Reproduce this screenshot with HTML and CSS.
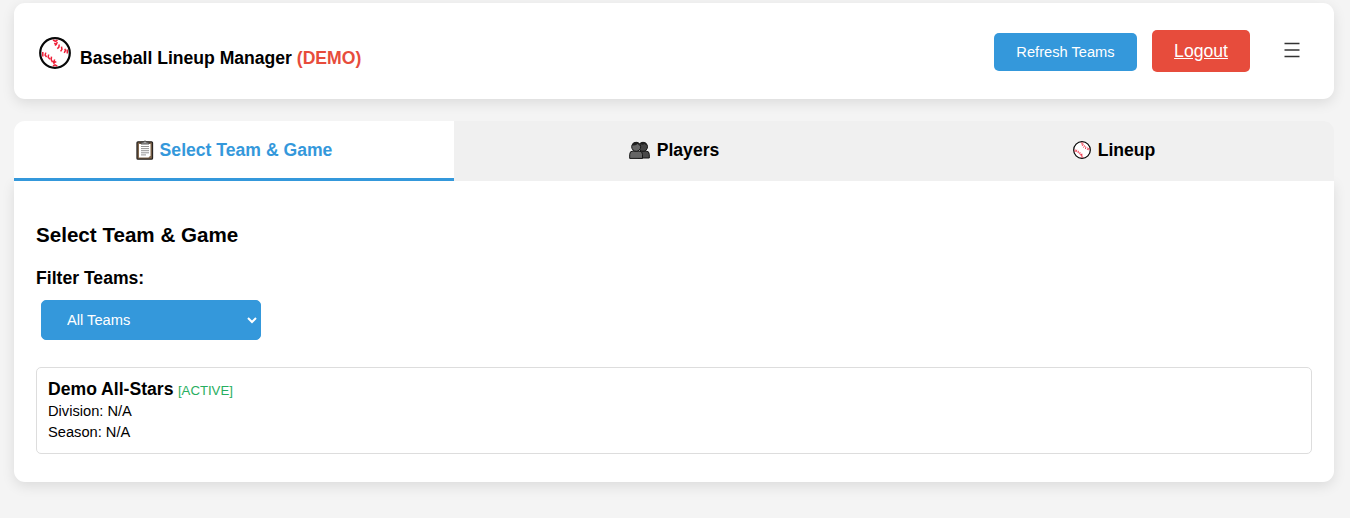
FILE: index.html
```html
<!DOCTYPE html>
<html lang="en">
<head>
<meta charset="utf-8">
<title>Baseball Lineup Manager</title>
<link rel="stylesheet" href="styles.css">
</head>
<body>
<svg class="defs" width="0" height="0" aria-hidden="true">
  <symbol id="ball" viewBox="0 0 32 32">
    <circle class="ball-skin" cx="16" cy="16" r="14.8"/>
    <g class="stitches">
      <path d="M14 3l2.500 1.300L18.500 3M15.800 8.300l1.500-.9L18.300 5M18.300 11.600l1.600-1.400.3-2.700M21.600 14.300l1.300-1.900-.4-2.700M25.200 15.800l1.200-2.100-.5-2M28.300 16.500l-.1-4M15.300 6l1.700 1.400"/>
      <path d="M3.800 15v4.500M6.800 15.600L6.100 18l1.500 2M9.600 17.500l-.4 2.700 1.800 2M12.500 19.700l-.3 2.900 1.300 2.500M15.700 22.500l-1.200 3 .8 1.300M14.500 25.500l2.800-.7M14 29l2-1.200 2.300 1.300"/>
    </g>
  </symbol>
</svg>
<div class="page">
  <header class="header">
    <div class="brand">
      <svg class="logo"><use href="#ball"/></svg>
      <h1 class="title">Baseball Lineup Manager <span class="demo">(DEMO)</span></h1>
    </div>
    <div class="actions">
      <button class="refresh">Refresh Teams</button>
      <a class="logout" href="#">Logout</a>
      <button class="menu" aria-label="Menu"><svg width="16" height="16" viewBox="0 0 16 16"><path d="M.5 1.500h15M.5 8h15M.5 14.500h15"/></svg></button>
    </div>
  </header>
  <main>
    <nav class="tabs">
      <a class="tab tab-active">
        <svg class="tab-icon" viewBox="0 0 18 20">
          <rect x="1" y="1.800" width="15.500" height="17.400" rx="1" fill="#80664b" stroke="#292522" stroke-width="1.300"/>
          <path d="M3 4h11.500v11.500L12.500 17.500H3z" fill="#fff"/>
          <path d="M5 6.500h8M5 8.600h8M5 10.700h8M5 12.800h8M5 14.900h5" stroke="#888" stroke-width=".9"/>
          <path d="M5 4V2.200h2.500Q9-.8 10.500 2.200H13V4z" fill="#aaa" stroke="#333" stroke-width=".8"/>
        </svg>
        <span class="tab-text">Select Team &amp; Game</span>
      </a>
      <a class="tab">
        <svg class="tab-icon people" viewBox="0 0 21 20">
          <g stroke="#171717" stroke-width="1">
            <path d="M9 18v-4q0-3 3-3h5q3.300 0 3.300 3.500V18z" fill="#4a4a4a"/>
            <circle cx="14" cy="6.800" r="4.500" fill="#444"/>
            <path d="M.7 18.400v-4q0-3.400 3.300-3.400h6q3.500 0 3.500 3.400v4z" fill="#656565"/>
            <circle cx="7.200" cy="6.800" r="4.500" fill="#666"/>
          </g>
          <path d="M2.800 5.300q4 1 6-1.500 1 2 2.300 2.200Q10 2 6.900 2 3.400 2.300 2.800 5.300zM11 3.800q3 2 4.500 0 1 1.500 2.700 1.500-1-3.300-4-3.300-1.700 0-3.200 1.800z" fill="#202020"/>
        </svg>
        <span class="tab-text">Players</span>
      </a>
      <a class="tab">
        <svg class="tab-icon small-ball"><use href="#ball"/></svg>
        <span class="tab-text">Lineup</span>
      </a>
    </nav>
    <section class="panel">
      <h2 class="heading">Select Team &amp; Game</h2>
      <label class="filter-label" for="filter">Filter Teams:</label>
      <select class="filter" id="filter"><option>All Teams</option></select>
      <article class="team">
        <div class="team-head"><strong class="team-name">Demo All-Stars</strong> <span class="status">[ACTIVE]</span></div>
        <div class="detail">Division: N/A</div>
        <div class="detail">Season: N/A</div>
      </article>
    </section>
  </main>
</div>
</body>
</html>
```
FILE: styles.css
```css
* { box-sizing: border-box; }
body {
  margin: 0;
  background: #f4f4f4;
  color: #000;
  font-family: "Liberation Sans", Arial, sans-serif;
}
.defs { position: absolute; }
.page { min-height: 100vh; padding: 3px 16px 0 14px; }
.header {
  display: flex;
  align-items: flex-start;
  justify-content: space-between;
  height: 96px;
  margin-bottom: 22px;
  padding: 27px 34px 0 25px;
  background: #fff;
  border-radius: 11px;
  box-shadow: 0 4px 13px rgba(0, 0, 0, .1);
}
.brand { display: flex; gap: 9px; padding-top: 7px; }
.logo { width: 32px; height: 32px; }
.ball-skin { fill: #fff; stroke: #080808; stroke-width: 2.2; }
.stitches { fill: none; stroke: #ee2038; stroke-width: 1.5; }
.title { margin: 11px 0 0; font-size: 17.6px; line-height: 20px; letter-spacing: -.01px; white-space: nowrap; }
.demo { color: #e74c3c; }
.actions { display: flex; align-items: flex-start; }
.refresh {
  width: 143px;
  height: 38px;
  margin: 3px 15px 0 0;
  padding: 0;
  border: 0;
  border-radius: 5px;
  background: #3498db;
  color: #fff;
  font: 14.67px/38px "Liberation Sans", Arial, sans-serif;
}
.logout {
  width: 98px;
  height: 42px;
  margin-right: 34px;
  border-radius: 5px;
  background: #e74c3c;
  color: #fff;
  font-size: 17.6px;
  line-height: 42px;
  text-align: center;
}
.menu { display: flex; margin-top: 12px; padding: 0; border: 0; background: none; }
.menu path { stroke: #333; stroke-width: 1.4; }
.tabs {
  position: relative;
  display: grid;
  grid-template-columns: repeat(3, 1fr);
  height: 60px;
  overflow: hidden;
  border-radius: 11px 11px 0 0;
}
.tab {
  display: flex;
  align-items: center;
  justify-content: center;
  gap: 7px;
  padding-bottom: 3px;
  background: #f0f0f0;
  font-size: 17.6px;
  font-weight: bold;
}
.tab-active { gap: 6px; background: #fff; color: #3498db; border-bottom: 3px solid #3498db; padding-bottom: 0; }
.tab-text { padding-top: 2px; }
.tab-icon { width: 18px; height: 20px; }
.people { width: 21px; }
.small-ball { width: 18px; height: 18px; }
.panel {
  height: 301px;
  padding: 42px 22px 0;
  background: #fff;
  border-radius: 0 0 11px 11px;
  box-shadow: 0 4px 13px rgba(0, 0, 0, .1);
}
.heading { margin: 0 0 20px; font-size: 20.6px; line-height: 24px; }
.filter-label { display: block; font-size: 17.6px; font-weight: bold; line-height: 22px; }
.filter {
  display: block;
  width: 220px;
  height: 40px;
  margin: 11px 0 27px 5px;
  padding: 0 0 0 21px;
  border: 1px solid #3498db;
  border-radius: 5px;
  background-color: #3498db;
  color: #fff;
  font: 14.67px "Liberation Sans", Arial, sans-serif;
}
.team { height: 87px; padding: 10px 11px; border: 1px solid #ddd; border-radius: 5px; }
.team-head { height: 23px; line-height: 22px; }
.team-name { font-size: 17.6px; }
.status { color: #27ae60; font-size: 13.2px; }
.detail { font-size: 14.67px; line-height: 21px; }
```
